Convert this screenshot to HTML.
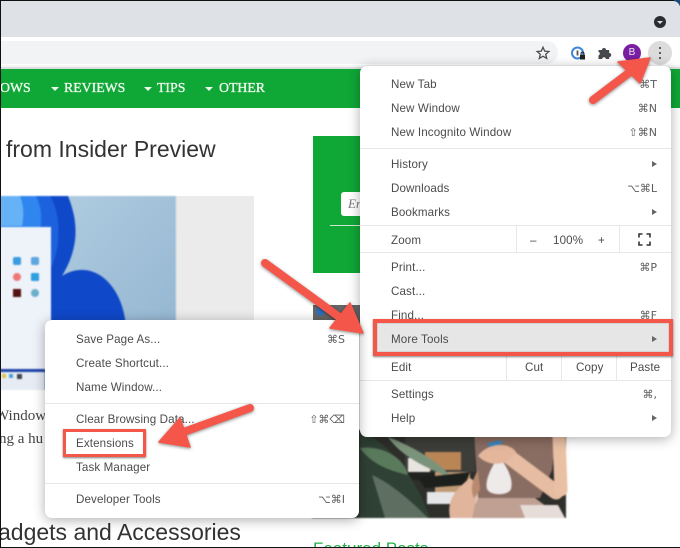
<!DOCTYPE html>
<html><head><meta charset="utf-8">
<style>
html,body{margin:0;padding:0;background:#fff}
#p{position:relative;width:680px;height:548px;overflow:hidden;background:#fff;font-family:"Liberation Sans","DejaVu Sans",sans-serif}
#p div{position:absolute}
.t{white-space:nowrap;font-size:11.6px;line-height:14px;color:#4b4b4b;letter-spacing:.12px;filter:blur(.3px);margin-top:1px}
.s{white-space:nowrap;font-size:11px;line-height:14px;color:#5c5c5c;text-align:right;right:0;font-family:"DejaVu Sans",sans-serif;filter:blur(.3px);margin-top:1px}
.n{white-space:nowrap;font-family:"Liberation Serif",serif;font-weight:normal;font-size:13.8px;line-height:16px;color:#eef8ee;top:80px;-webkit-text-stroke:.35px #eef8ee;filter:blur(.25px)}
.c{width:0;height:0;border-left:4px solid transparent;border-right:4px solid transparent;border-top:4px solid #eef8ee;top:87px}
.a{width:0;height:0;border-top:3.5px solid transparent;border-bottom:3.5px solid transparent;border-left:5px solid #666;margin-top:1px}
.h{height:1px;background:#e6e6e6}
.v{width:1px;background:#e8e8e8}
.m{background:#fff;border-radius:7px;box-shadow:0 2px 12px rgba(0,0,0,.32)}
</style></head><body>
<div id="p">
<!-- browser chrome -->
<div style="left:0;top:0;width:680px;height:38px;background:#dee1e6"></div>
<div style="left:0;top:37px;width:680px;height:31px;background:#fff"></div>
<div style="left:0;top:41px;width:558px;height:23px;background:#f1f3f4;border-radius:0 12px 12px 0"></div>
<div style="left:0;top:65px;width:680px;height:4px;background:#f6f6f7"></div>
<div style="left:0;top:67px;width:680px;height:2px;background:#dcdddf"></div>
<div style="left:654px;top:16px;width:12px;height:12px;border-radius:50%;background:#2b2d30"></div>
<div style="left:657px;top:21px;width:0;height:0;border-left:3px solid transparent;border-right:3px solid transparent;border-top:3.5px solid #dee1e6"></div>
<svg style="position:absolute;left:535px;top:45px" width="16" height="16" viewBox="0 0 16 16"><path d="M8 2.2l1.7 3.9 4.2.4-3.2 2.8 1 4.1L8 11.2l-3.700 2.2 1-4.100L2.100 6.500l4.200-.4z" fill="none" stroke="#4a4c50" stroke-width="1.300"/></svg>
<svg style="position:absolute;left:570px;top:45px" width="17" height="17" viewBox="0 0 17 17"><circle cx="7.500" cy="8" r="5.500" fill="none" stroke="#3f86d8" stroke-width="2"/><rect x="6.600" y="5.500" width="1.800" height="5" fill="#555"/><rect x="10" y="10" width="5" height="4.500" fill="#222"/><path d="M11 10V8.600a1.500 1.500 0 013 0V10" fill="none" stroke="#222"/></svg>
<svg style="position:absolute;left:597px;top:45px" width="15" height="15" viewBox="0 0 15 15"><path d="M1.500 5H5a2 2 0 014 0h3.200v3a2 2 0 010 4V14H8.800a1.800 1.800 0 00-3.600 0H1.500v-3.600a1.900 1.900 0 000-3.600z" fill="#46484c"/></svg>
<div style="left:623px;top:44px;width:18px;height:18px;border-radius:50%;background:#7b1fa2;color:#f0e6f4;font-size:10px;line-height:18px;text-align:center">B</div>
<div style="left:648px;top:41px;width:24px;height:24px;border-radius:50%;background:#dcdcdd"></div>
<div style="left:659px;top:47px;width:2.400px;height:2.400px;border-radius:50%;background:#333"></div>
<div style="left:659px;top:52px;width:2.400px;height:2.400px;border-radius:50%;background:#333"></div>
<div style="left:659px;top:57px;width:2.400px;height:2.400px;border-radius:50%;background:#333"></div>

<!-- nav -->
<div style="left:0;top:69px;width:680px;height:39px;background:#0fa736"></div>
<div class="n" style="left:0">OWS</div>
<div class="c" style="left:51px"></div><div class="n" style="left:64px">REVIEWS</div>
<div class="c" style="left:144px"></div><div class="n" style="left:157px">TIPS</div>
<div class="c" style="left:205px"></div><div class="n" style="left:219px">OTHER</div>

<!-- article -->
<div style="left:6px;top:134px;font-size:23px;line-height:30px;color:#333;white-space:nowrap;filter:blur(.3px)">from Insider Preview</div>
<div style="left:176px;top:196px;width:78px;height:194px;background:#ebebeb"></div>
<svg style="position:absolute;left:0;top:196px;filter:blur(.8px)" width="176" height="194" viewBox="0 0 176 194">
<defs><linearGradient id="g" x1="0" y1="0" x2="1" y2="1"><stop offset="0" stop-color="#b5d0e2"/><stop offset="1" stop-color="#8fb2cf"/></linearGradient></defs>
<rect width="176" height="194" fill="url(#g)"/>
<path d="M0 0H68C78 25 80 50 62 80C90 62 122 85 126 130C128 160 118 180 105 194H0z" fill="#0f48c8"/>
<path d="M0 0H50C62 20 60 50 52 70L0 80z" fill="#1c62de"/>
<path d="M0 0H36C42 12 42 24 40 34L0 34z" fill="#2f86ee"/>
<path d="M0 0H20C24 10 24 20 22 30L0 30z" fill="#66b2f6"/>
<rect y="31" width="51" height="143" fill="#eef2f9"/>
<rect y="174" width="45" height="20" fill="#e6ecf4"/>
<rect y="173" width="45" height="3" fill="#1f45a8"/>
<rect x="13" y="61" width="8" height="8" rx="2" fill="#3a9be0"/>
<rect x="31" y="61" width="8" height="8" rx="2" fill="#5da6e0"/>
<circle cx="17" cy="81" r="4" fill="#e77"/>
<rect x="31" y="77" width="8" height="8" rx="1" fill="#2f9fe0"/>
<rect x="13" y="93" width="8" height="8" fill="#511"/>
<circle cx="35" cy="97" r="4" fill="#6ab0c8"/>
<rect y="178" x="2" width="4" height="4" fill="#dcc24a"/><rect y="178" x="9" width="4" height="4" fill="#4aa0d0"/><rect y="178" x="17" width="5" height="5" fill="#445"/>
</svg>
<div style="left:0;top:405px;font-family:'Liberation Serif',serif;font-size:15px;line-height:22px;color:#444;white-space:nowrap;margin-left:-5px">Window</div>
<div style="left:0;top:428px;font-family:'Liberation Serif',serif;font-size:15px;line-height:22px;color:#444;white-space:nowrap;margin-left:-1px">ng a hu</div>
<div style="left:-2px;top:517px;font-size:23px;line-height:30px;color:#333;white-space:nowrap;filter:blur(.3px)">adgets and Accessories</div>

<!-- sidebar -->
<div style="left:313px;top:136px;width:60px;height:137px;background:#0fa736"></div>
<div style="left:341px;top:192px;width:40px;height:24px;background:#fff;border-radius:3px;font:italic 13px/24px 'Liberation Serif',serif;color:#777;text-indent:7px;overflow:hidden">En</div>
<div style="left:330px;top:225px;width:40px;height:1px;background:#cde8d2"></div>
<div style="left:313px;top:305px;width:47px;height:20px;background:#666"></div>
<div style="left:316px;top:307px;width:9px;height:9px;border-radius:50%;background:#2f6fb5"></div>
<svg style="position:absolute;left:312px;top:430px;filter:blur(.7px)" width="258" height="88" viewBox="312 430 258 88">
<rect x="312" y="430" width="258" height="88" fill="#2e2e2b"/>
<rect x="405" y="430" width="70" height="42" fill="#3d3d3a"/>
<rect x="425" y="452" width="36" height="18" fill="#b98555"/>
<rect x="408" y="458" width="22" height="14" fill="#e8e4df"/>
<rect x="427" y="492" width="52" height="12" fill="#e6e6e8"/>
<rect x="405" y="472" width="40" height="8" fill="#202220"/>
<rect x="435" y="472" width="35" height="20" fill="#c09a74"/>
<path d="M360 430V518H430C420 490 400 450 360 430z" fill="#2f4034"/>
<path d="M360 448C385 445 405 460 408 475 385 470 370 462 360 448z" fill="#5a7a5c"/>
<path d="M388 437C410 445 440 462 452 478 425 468 400 455 388 437z" fill="#7b937b"/>
<path d="M372 475C395 485 420 510 428 518H385z" fill="#5e6e60"/>
<path d="M418 478L470 472 465 485 425 488z" fill="#1d1f1c"/>
<path d="M474 430H556L552 470 540 498 478 498z" fill="#8a6d62"/>
<path d="M478 498H535L562 518H470z" fill="#bfa093"/>
<path d="M520 505L558 505 565 518H525z" fill="#e6dcd8"/>
<path d="M566 430H570V518H566z" fill="#fdfdfd"/>
<path d="M508 456L556 492" stroke="#e6bda2" stroke-width="15" stroke-linecap="round" fill="none"/>
<path d="M559 437L561 490" stroke="#e9c0a4" stroke-width="13" stroke-linecap="round" fill="none"/>
<path d="M450 518C446 498 458 488 470 478L480 485 472 518z" fill="#e0b59c"/>
<path d="M478 470C472 480 470 490 474 498L480 490z" fill="#b98a6e"/>
<path d="M495 462H503C510 472 513 482 511 489 508 496 490 496 487 489 485 482 489 472 495 462z" fill="#eeeaea"/>
<path d="M488 443l14-3v4l-14 3z" fill="#3a84bd"/>
<path d="M478 456C488 442 510 442 516 452 508 466 490 468 478 456z" fill="#e4b79d"/>
</svg>
<div style="left:313px;top:539px;font-size:17px;line-height:20px;color:#1fb14a;white-space:nowrap">Featured Posts</div>

<!-- main menu -->
<div class="m" style="left:360px;top:66px;width:311px;height:371px">
  <div class="t" style="left:31px;top:11px">New Tab</div><div class="s" style="right:14px;top:11px">⌘T</div>
  <div class="t" style="left:31px;top:35px">New Window</div><div class="s" style="right:14px;top:35px">⌘N</div>
  <div class="t" style="left:31px;top:59px">New Incognito Window</div><div class="s" style="right:14px;top:59px">⇧⌘N</div>
  <div class="h" style="left:0;top:82px;width:311px"></div>
  <div class="t" style="left:31px;top:91px">History</div><div class="a" style="left:292px;top:94px"></div>
  <div class="t" style="left:31px;top:115px">Downloads</div><div class="s" style="right:14px;top:115px">⌥⌘L</div>
  <div class="t" style="left:31px;top:139px">Bookmarks</div><div class="a" style="left:292px;top:142px"></div>
  <div class="h" style="left:0;top:159px;width:311px"></div>
  <div class="t" style="left:31px;top:167px">Zoom</div>
  <div class="v" style="left:156px;top:159px;height:27px"></div>
  <div class="v" style="left:259px;top:159px;height:27px"></div>
  <div class="t" style="left:170px;top:167px">–</div>
  <div class="t" style="left:193px;top:167px">100%</div>
  <div class="t" style="left:238px;top:167px">+</div>
  <svg style="position:absolute;left:278px;top:167px" width="13" height="13" viewBox="0 0 13 13"><path d="M1 4.500V1h3.500M8.500 1H12v3.500M12 8.500V12H8.500M4.500 12H1V8.500" fill="none" stroke="#333" stroke-width="1.600"/></svg>
  <div class="h" style="left:0;top:186px;width:311px"></div>
  <div class="t" style="left:31px;top:194px">Print...</div><div class="s" style="right:14px;top:194px">⌘P</div>
  <div class="t" style="left:31px;top:218px">Cast...</div>
  <div class="t" style="left:31px;top:242px">Find...</div><div class="s" style="right:14px;top:242px">⌘F</div>
  <div style="left:14px;top:256px;width:297px;height:31px;background:#e6e6e6"></div>
  <div class="t" style="left:31px;top:266px">More Tools</div><div class="a" style="left:292px;top:269px"></div>
  <div class="t" style="left:31px;top:294px">Edit</div>
  <div class="v" style="left:146px;top:287px;height:27px"></div>
  <div class="v" style="left:201px;top:287px;height:27px"></div>
  <div class="v" style="left:256px;top:287px;height:27px"></div>
  <div class="t" style="left:165px;top:294px">Cut</div>
  <div class="t" style="left:216px;top:294px">Copy</div>
  <div class="t" style="left:270px;top:294px">Paste</div>
  <div class="h" style="left:0;top:314px;width:311px"></div>
  <div class="t" style="left:31px;top:321px">Settings</div><div class="s" style="right:14px;top:321px">⌘,</div>
  <div class="t" style="left:31px;top:345px">Help</div><div class="a" style="left:292px;top:348px"></div>
</div>

<!-- submenu -->
<div class="m" style="left:45px;top:320px;width:314px;height:198px">
  <div class="t" style="left:31px;top:12px">Save Page As...</div><div class="s" style="right:14px;top:12px">⌘S</div>
  <div class="t" style="left:31px;top:36px">Create Shortcut...</div>
  <div class="t" style="left:31px;top:60px">Name Window...</div>
  <div class="h" style="left:0;top:83px;width:314px"></div>
  <div class="t" style="left:31px;top:92px">Clear Browsing Data...</div><div class="s" style="right:14px;top:92px">⇧⌘⌫</div>
  <div class="t" style="left:31px;top:116px">Extensions</div>
  <div class="t" style="left:31px;top:140px">Task Manager</div>
  <div class="h" style="left:0;top:163px;width:314px"></div>
  <div class="t" style="left:31px;top:172px">Developer Tools</div><div class="s" style="right:14px;top:172px">⌥⌘I</div>
</div>

<!-- annotations -->
<div style="left:373px;top:319px;width:292px;height:29px;border:4px solid #f4574a;box-shadow:0 1px 2px rgba(0,0,0,.5),inset 0 0 1px rgba(0,0,0,.5)"></div>
<div style="left:63px;top:429px;width:77px;height:22px;border:3px solid #f4574a;box-shadow:0 1px 2px rgba(0,0,0,.5)"></div>
<svg style="position:absolute;left:0;top:0;filter:drop-shadow(0 1.500px 1.500px rgba(0,0,0,.45))" width="680" height="548" viewBox="0 0 680 548">
<g fill="#f4574a" stroke="#f4574a" stroke-linejoin="round">
<path d="M593 100L630 72" stroke-width="8" stroke-linecap="round"/>
<path d="M650 58L618 62 640 83z" stroke-width="1.500"/>
<path d="M265 263L342 319" stroke-width="8" stroke-linecap="round"/>
<path d="M363 333L350 303 330 328z" stroke-width="1.500"/>
<path d="M250 408L178 434" stroke-width="8" stroke-linecap="round"/>
<path d="M159 442L180 418 190 447z" stroke-width="1.500"/>
</g></svg>

<!-- frame edges -->
<div style="left:0;top:0;width:680px;height:1px;background:#111"></div>
<div style="left:0;top:0;width:1px;height:548px;background:#111"></div>
<div style="left:0;top:547px;width:680px;height:1px;background:#111"></div>
<div style="left:674px;top:0;width:6px;height:6px;background:#1c4a78"></div>
<div style="left:668px;top:1px;width:12px;height:12px;background:#dee1e6;border-radius:0 7px 0 0"></div>
</div>
</body></html>
